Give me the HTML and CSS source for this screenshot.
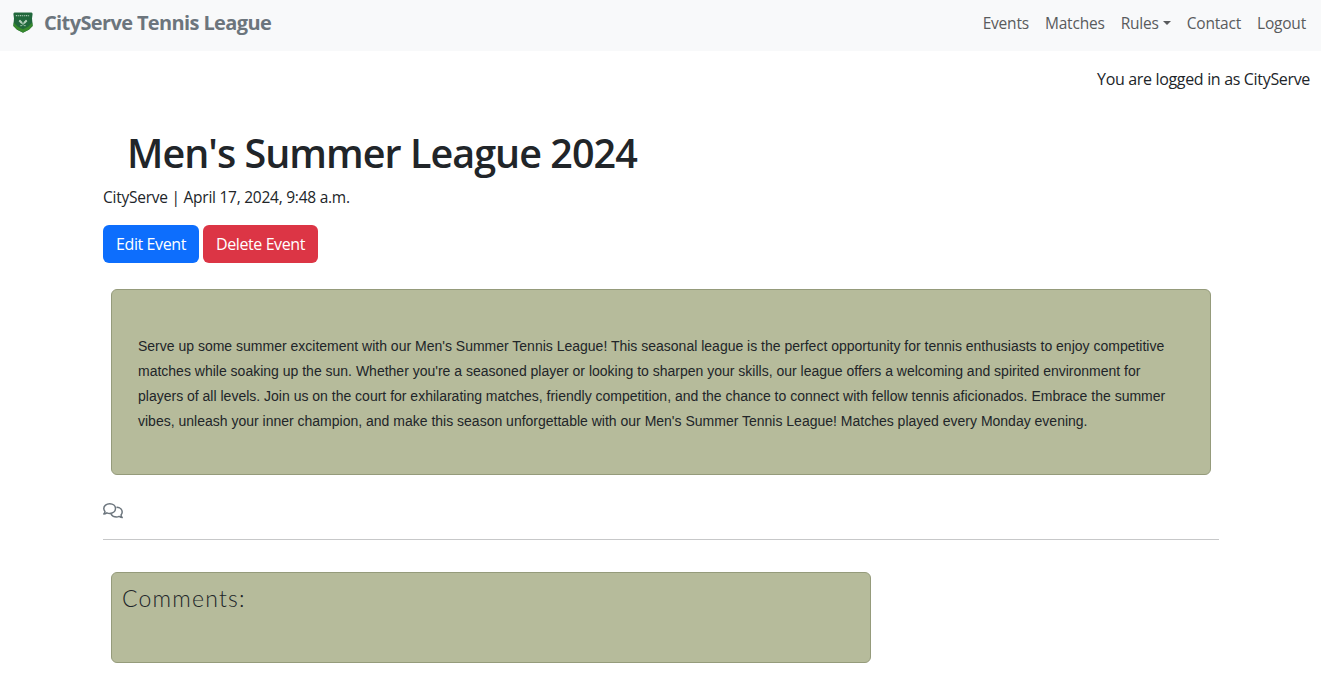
FILE: index.html
```html
<!DOCTYPE html>
<html lang="en">
<head>
<meta charset="utf-8">
<title>CityServe Tennis League</title>
<link rel="stylesheet" href="styles.css">
</head>
<body>
<header class="navbar">
  <a class="brand" href="#">
    <svg class="brand-logo" viewBox="0 0 20 21" aria-hidden="true">
      <path d="M1.5.5H18.500Q19.500.700 19.600 2L19 6.500 19.700 14 16 17.700 10 20.800 4 17.700.300 14 1 6.500.400 2Q.500.700 1.500.500Z" fill="#21683c"/>
      <path d="M.700 10.500 4.500 14.500 10 17.300 15.500 14.500 19.300 10.500 19.500 14 16 17.500 10 20.500 4 17.500.500 14Z" fill="#388a2c"/>
      <path d="M3.500 4.200V3M5.500 4.200V3.300M7.500 4.200V3M9.500 4.200V3.300M11.500 4.200V3.300M13.500 4.200V3M15.500 4.200V3.300" stroke="#a9c6b1" stroke-width="1.300"/>
      <path d="M6.500 8.200 8 10.500 12.500 14M13.500 8.200 12 10.500 7.500 14" fill="none" stroke="#8fb69b" stroke-width="1.400"/>
      <path d="M6.300 8.500 9 11M13.700 8.500 11 11" stroke="#b2ceba" stroke-width="2"/>
    </svg>
    <span class="brand-name">CityServe Tennis League</span>
  </a>
  <nav class="nav-links">
    <a href="#">Events</a>
    <a href="#">Matches</a>
    <a href="#" class="dropdown">Rules</a>
    <a href="#">Contact</a>
    <a href="#">Logout</a>
  </nav>
</header>
<p class="login-status">You are logged in as CityServe</p>
<main class="container">
  <h1 class="event-title">Men's Summer League 2024</h1>
  <p class="byline">CityServe | April 17, 2024, 9:48 a.m.</p>
  <div class="actions">
    <a class="btn btn-edit" href="#">Edit Event</a>
    <a class="btn btn-delete" href="#">Delete Event</a>
  </div>
  <section class="card event-card">
    <p class="event-text">Serve up some summer excitement with our Men's Summer Tennis League! This seasonal league is the perfect opportunity for tennis enthusiasts to enjoy competitive<br>matches while soaking up the sun. Whether you're a seasoned player or looking to sharpen your skills, our league offers a welcoming and spirited environment for<br>players of all levels. Join us on the court for exhilarating matches, friendly competition, and the chance to connect with fellow tennis aficionados. Embrace the summer<br>vibes, unleash your inner champion, and make this season unforgettable with our Men's Summer Tennis League! Matches played every Monday evening.</p>
  </section>
  <svg class="comments-icon" viewBox="0 0 20 16" aria-hidden="true">
    <path d="M6.700.8C10 .8 12.500 2.900 12.500 5.600S10 10.400 6.700 10.400C5.700 10.400 4.700 10.200 3.900 9.800 2.900 10.500 1.900 11 .8 11 1.500 10.200 1.900 9.300 2 8.500 1.200 7.700.8 6.700.8 5.600.8 2.900 3.400.8 6.700.8Z"/>
    <path d="M14 4.300C17 4.500 19.200 6.500 19.200 9.100 19.200 10.200 18.800 11.200 18 12 18.100 12.900 18.500 13.700 19.200 14.600 18.100 14.600 17.100 14 16.100 13.400 15.300 13.800 14.400 14 13.400 14 11.100 14 9.100 12.900 8.200 11.400"/>
  </svg>
  <hr class="divider">
  <section class="card comments-card">
    <h2 class="comments-title">Comments:</h2>
  </section>
</main>
</body>
</html>
```
FILE: styles.css
```css
* { box-sizing: border-box; }

body {
  margin: 0;
  background: #fff;
  color: #212529;
  font: 16px/24px "Open Sans", "Noto Sans", sans-serif;
}

h1, h2, p { margin: 0; }
a { text-decoration: none; }

.navbar {
  display: flex;
  justify-content: space-between;
  align-items: flex-start;
  height: 51px;
  padding: 11px 15px 0 13px;
  background: #f8f9fa;
}

.brand {
  display: flex;
  align-items: flex-start;
  gap: 11px;
  color: #6c757d;
}

.brand-logo {
  width: 20px;
  height: 21px;
  margin-top: 1px;
}

.brand-name {
  font-size: 20px;
  font-weight: 700;
  letter-spacing: -0.63px;
}

.nav-links {
  display: flex;
  gap: 16px;
}

.nav-links a {
  color: #595b5d;
  font-size: 15.5px;
  letter-spacing: -0.2px;
}

.dropdown::after {
  content: "";
  display: inline-block;
  margin-left: 4px;
  vertical-align: 4px;
  border-top: 4px solid;
  border-left: 4px solid transparent;
  border-right: 4px solid transparent;
}

.login-status {
  padding: 16px 11px 0 0;
  text-align: right;
  letter-spacing: -0.33px;
}

.container {
  width: 1116px;
  margin: 38px 0 0 103px;
}

.event-title {
  padding-left: 24px;
  font-size: 39.5px;
  font-weight: 600;
  line-height: 48px;
  letter-spacing: -0.97px;
}

.byline {
  margin-top: 8px;
  font-size: 15.5px;
  letter-spacing: -0.25px;
}

.actions {
  display: flex;
  gap: 4px;
  margin-top: 16px;
}

.btn {
  height: 38px;
  border-radius: 6px;
  color: #fff;
  line-height: 38px;
  text-align: center;
  letter-spacing: -0.4px;
}

.btn-edit {
  width: 96px;
  background: #0d6efd;
}

.btn-delete {
  width: 115px;
  background: #dc3545;
}

.card {
  background: #b6bb9b;
  border: 1px solid #959b7b;
  border-radius: 6px;
}

.event-card {
  height: 186px;
  margin: 26px 8px 0;
  padding: 44px 26px;
}

.event-text {
  font: 14px/25px "Liberation Sans", Arial, sans-serif;
  white-space: nowrap;
}

.comments-icon {
  display: block;
  width: 20px;
  height: 16px;
  margin-top: 28px;
  fill: none;
  stroke: #6c757d;
  stroke-width: 1.5;
  stroke-linejoin: round;
  stroke-linecap: round;
}

.divider {
  height: 1px;
  margin: 20px 0 32px;
  border: 0;
  background: #c7c8c9;
}

.comments-card {
  width: 760px;
  height: 91px;
  margin-left: 8px;
  padding: 11px 10px;
}

.comments-title {
  font: 300 23px/29px Lato, sans-serif;
  letter-spacing: 1.2px;
}
```
